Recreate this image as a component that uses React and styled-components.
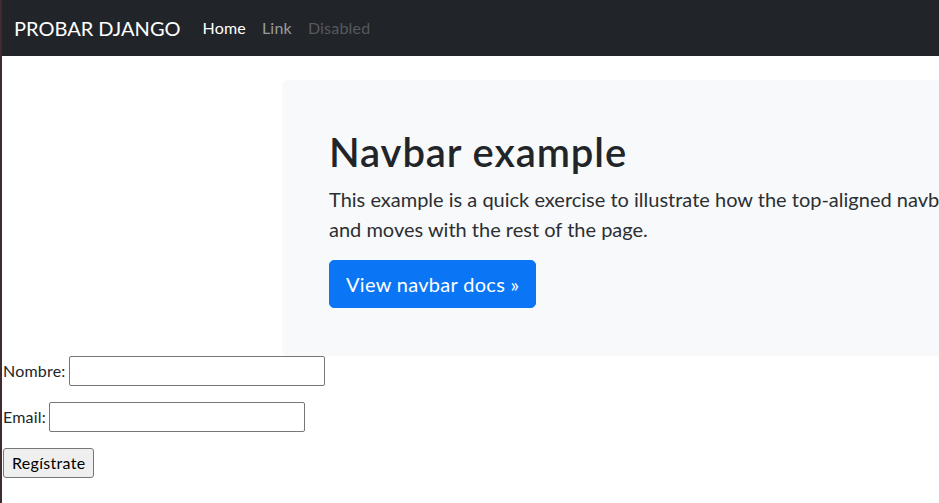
import React from "react";
import styled, { createGlobalStyle } from "styled-components";

const Global = createGlobalStyle`
  html, body { margin: 0; padding: 0; overflow: hidden; background: #fff; }
  body {
    border-left: 2px solid #3f2b30;
    min-height: 503px;
    box-sizing: border-box;
    font-family: Lato, "Open Sans", sans-serif;
    font-size: 16px;
    line-height: 1.5;
    color: #212529;
  }
  *, *::before, *::after { box-sizing: border-box; }
`;

const Navbar = styled.nav`
  height: 56px;
  background: #212529;
  display: flex;
  align-items: center;
  padding: 0 12px;
`;

const Brand = styled.a`
  font-size: 20px;
  color: #fff;
  margin-right: 14px;
  text-decoration: none;
  white-space: nowrap;
`;

const NavList = styled.div`
  display: flex;
`;

const NavLink = styled.a`
  padding: 8px;
  font-size: 16px;
  letter-spacing: 0.2px;
  text-decoration: none;
  color: ${(p) =>
    p.$state === "active"
      ? "#fff"
      : p.$state === "disabled"
      ? "rgba(255,255,255,0.25)"
      : "rgba(255,255,255,0.55)"};
`;

const Main = styled.main`
  padding-top: 24px;
`;

const Jumbotron = styled.div`
  margin-left: 280px;
  width: 1296px;
  background: #f8f9fa;
  border-radius: 6px;
  padding: 48px 48px 48px 47px;
`;

const Title = styled.h1`
  margin: 0 0 8px;
  font-size: 40px;
  font-weight: 600;
  letter-spacing: 0.9px;
  line-height: 1.2;
`;

const Lead = styled.p`
  margin: 0 0 16px;
  font-size: 20px;
  font-weight: 400;
  color: #2b2f33;
  line-height: 1.5;
  white-space: nowrap;
`;

const BigButton = styled.a`
  display: inline-block;
  background: #0a76f6;
  border: 1px solid #0a76f6;
  color: #fff;
  font-size: 20px;
  line-height: 1.5;
  letter-spacing: 0.3px;
  padding: 8px 16px;
  border-radius: 5px;
  text-decoration: none;
`;

const Form = styled.form`
  padding-left: 1px;
`;

const Row = styled.p`
  margin: 0 0 16px;
  display: flex;
  align-items: center;
  height: 30px;
`;

const Label = styled.label`
  margin-right: 3px;
  letter-spacing: 0.2px;
`;

const Input = styled.input`
  width: 256px;
  height: 30px;
  border: 1px solid #767676;
  border-radius: 2px;
  font: inherit;
  padding: 1px 2px;
`;

const Submit = styled.button`
  height: 30px;
  padding: 0 8px;
  font: inherit;
  letter-spacing: 0.3px;
  color: #000;
  background: #efefef;
  border: 1px solid #767676;
  border-radius: 3px;
`;

export default function App() {
  return (
    <>
      <Global />
      <Navbar>
        <Brand href="#">PROBAR DJANGO</Brand>
        <NavList>
          <NavLink $state="active" href="#">Home</NavLink>
          <NavLink href="#">Link</NavLink>
          <NavLink $state="disabled">Disabled</NavLink>
        </NavList>
      </Navbar>
      <Main>
        <Jumbotron>
          <Title>Navbar example</Title>
          <Lead>
            This example is a quick exercise to illustrate how the top-aligned navbar works. As you scroll, this navbar remains in its original position
            <br />
            and moves with the rest of the page.
          </Lead>
          <BigButton href="#">View navbar docs »</BigButton>
        </Jumbotron>
      </Main>
      <Form>
        <Row>
          <Label>Nombre:</Label>
          <Input type="text" />
        </Row>
        <Row>
          <Label>Email:</Label>
          <Input type="email" />
        </Row>
        <Submit type="submit">Regístrate</Submit>
      </Form>
    </>
  );
}
